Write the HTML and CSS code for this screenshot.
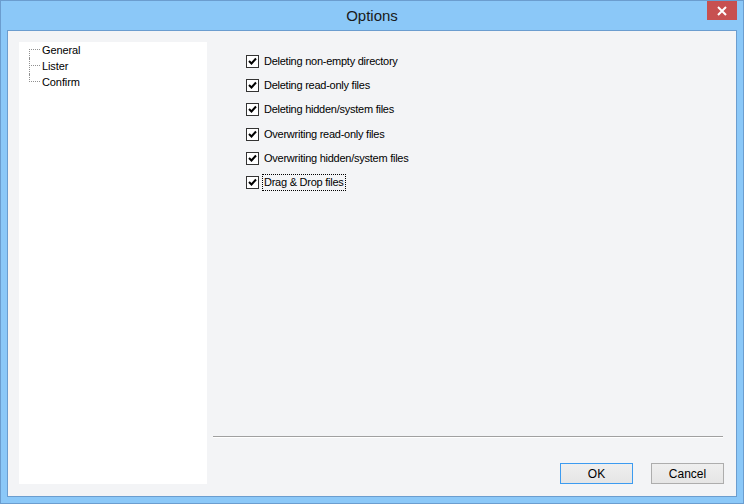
FILE: index.html
```html
<!DOCTYPE html>
<html>
<head>
	<title>Options</title>
	<link rel="stylesheet" href="styles.css">
</head>
<body>
	<div class="window">
		<div class="titlebar">
			<div></div>
			<div class="title">Options</div>
			<div class="close-btn">
				<svg width="12" height="10" viewBox="0 0 12 10">
					<path d="M2 1 L10 9 M10 1 L2 9" stroke="#fff" stroke-width="2" fill="none"/>
				</svg>
			</div>
		</div>
		<div class="client">
			<div class="tree">
				<div class="tree-item">General</div>
				<div class="tree-item">Lister</div>
				<div class="tree-item last">Confirm</div>
			</div>
			<div class="page">
				<div class="check-list">
					<div class="check-row"><span class="check-box"><svg width="11" height="11" viewBox="0 0 11 11"><path d="M2 5 L4.5 7.5 L9 2.5" stroke="#000" stroke-width="2" fill="none"/></svg></span><span class="check-label">Deleting non-empty directory</span></div>
					<div class="check-row"><span class="check-box"><svg width="11" height="11" viewBox="0 0 11 11"><path d="M2 5 L4.5 7.5 L9 2.5" stroke="#000" stroke-width="2" fill="none"/></svg></span><span class="check-label">Deleting read-only files</span></div>
					<div class="check-row"><span class="check-box"><svg width="11" height="11" viewBox="0 0 11 11"><path d="M2 5 L4.5 7.5 L9 2.5" stroke="#000" stroke-width="2" fill="none"/></svg></span><span class="check-label">Deleting hidden/system files</span></div>
					<div class="check-row"><span class="check-box"><svg width="11" height="11" viewBox="0 0 11 11"><path d="M2 5 L4.5 7.5 L9 2.5" stroke="#000" stroke-width="2" fill="none"/></svg></span><span class="check-label">Overwriting read-only files</span></div>
					<div class="check-row"><span class="check-box"><svg width="11" height="11" viewBox="0 0 11 11"><path d="M2 5 L4.5 7.5 L9 2.5" stroke="#000" stroke-width="2" fill="none"/></svg></span><span class="check-label">Overwriting hidden/system files</span></div>
					<div class="check-row"><span class="check-box"><svg width="11" height="11" viewBox="0 0 11 11"><path d="M2 5 L4.5 7.5 L9 2.5" stroke="#000" stroke-width="2" fill="none"/></svg></span><span class="check-label focused">Drag &amp; Drop files</span></div>
				</div>
				<div class="separator"></div>
				<div class="buttons">
					<button class="btn default">OK</button>
					<button class="btn">Cancel</button>
				</div>
			</div>
		</div>
	</div>
</body>
</html>
```

FILE: styles.css
```css
body {
	margin: 0;
	padding: 0;
	font-family: 'Liberation Sans', Arial, sans-serif;
}

.window {
	width: 744px;
	height: 504px;
	box-sizing: border-box;
	border: 1px solid #6b9dcf;
	background-color: #8bc8f8;
	display: flex;
	flex-direction: column;
	padding: 0 6px 6px 6px;
}

.titlebar {
	height: 29px;
	display: grid;
	grid-template-columns: 1fr auto 1fr;
	align-items: start;
}

.title {
	font-size: 15px;
	color: #1a1a1a;
	line-height: 29px;
}

.close-btn {
	justify-self: end;
	width: 30px;
	height: 19px;
	background-color: #c75050;
	display: flex;
	align-items: center;
	justify-content: center;
}

.client {
	flex: 1;
	display: flex;
	border: 1px solid #6b9dcf;
	background-color: #f3f4f6;
	padding: 11px 12px 12px 11px;
}

.tree {
	width: 188px;
	background-color: #fff;
	padding-left: 10px;
	box-sizing: border-box;
	font-size: 11px;
	letter-spacing: -0.1px;
	color: #000;
}

.tree-item {
	position: relative;
	height: 16px;
	line-height: 16px;
	padding-left: 13px;
}

.tree-item::before {
	content: '';
	position: absolute;
	left: 0;
	top: 0;
	height: 100%;
	border-left: 1px dotted #909090;
}

.tree-item:first-child::before {
	top: 7px;
	height: 9px;
}

.tree-item.last::before {
	height: 8px;
}

.tree-item::after {
	content: '';
	position: absolute;
	left: 0;
	top: 7px;
	width: 11px;
	border-top: 1px dotted #909090;
}

.page {
	flex: 1;
	margin-left: 6px;
	display: flex;
	flex-direction: column;
}

.check-list {
	padding: 7px 0 0 33px;
}

.check-row {
	display: flex;
	align-items: center;
	height: 24.3px;
	font-size: 11px;
	letter-spacing: -0.25px;
	color: #000;
}

.check-box {
	width: 11px;
	height: 11px;
	border: 1px solid #333;
	background-color: #fff;
	display: flex;
	margin-right: 4px;
}

.check-label {
	padding: 1px 1px;
	line-height: 13px;
}

.check-label.focused {
	outline: 1px dotted #000;
}

.separator {
	margin-top: auto;
	margin-right: 1px;
	border-top: 1px solid #a0a0a0;
	border-bottom: 1px solid #fff;
}

.buttons {
	display: flex;
	justify-content: flex-end;
	gap: 18px;
	margin-top: 25px;
}

.btn {
	width: 73px;
	height: 21px;
	font-family: 'Liberation Sans', Arial, sans-serif;
	font-size: 12px;
	color: #000;
	border: 1px solid #adadad;
	background: linear-gradient(#efefef, #e5e5e5);
	padding: 0;
}

.btn.default {
	border-color: #3c9bf0;
}
```
